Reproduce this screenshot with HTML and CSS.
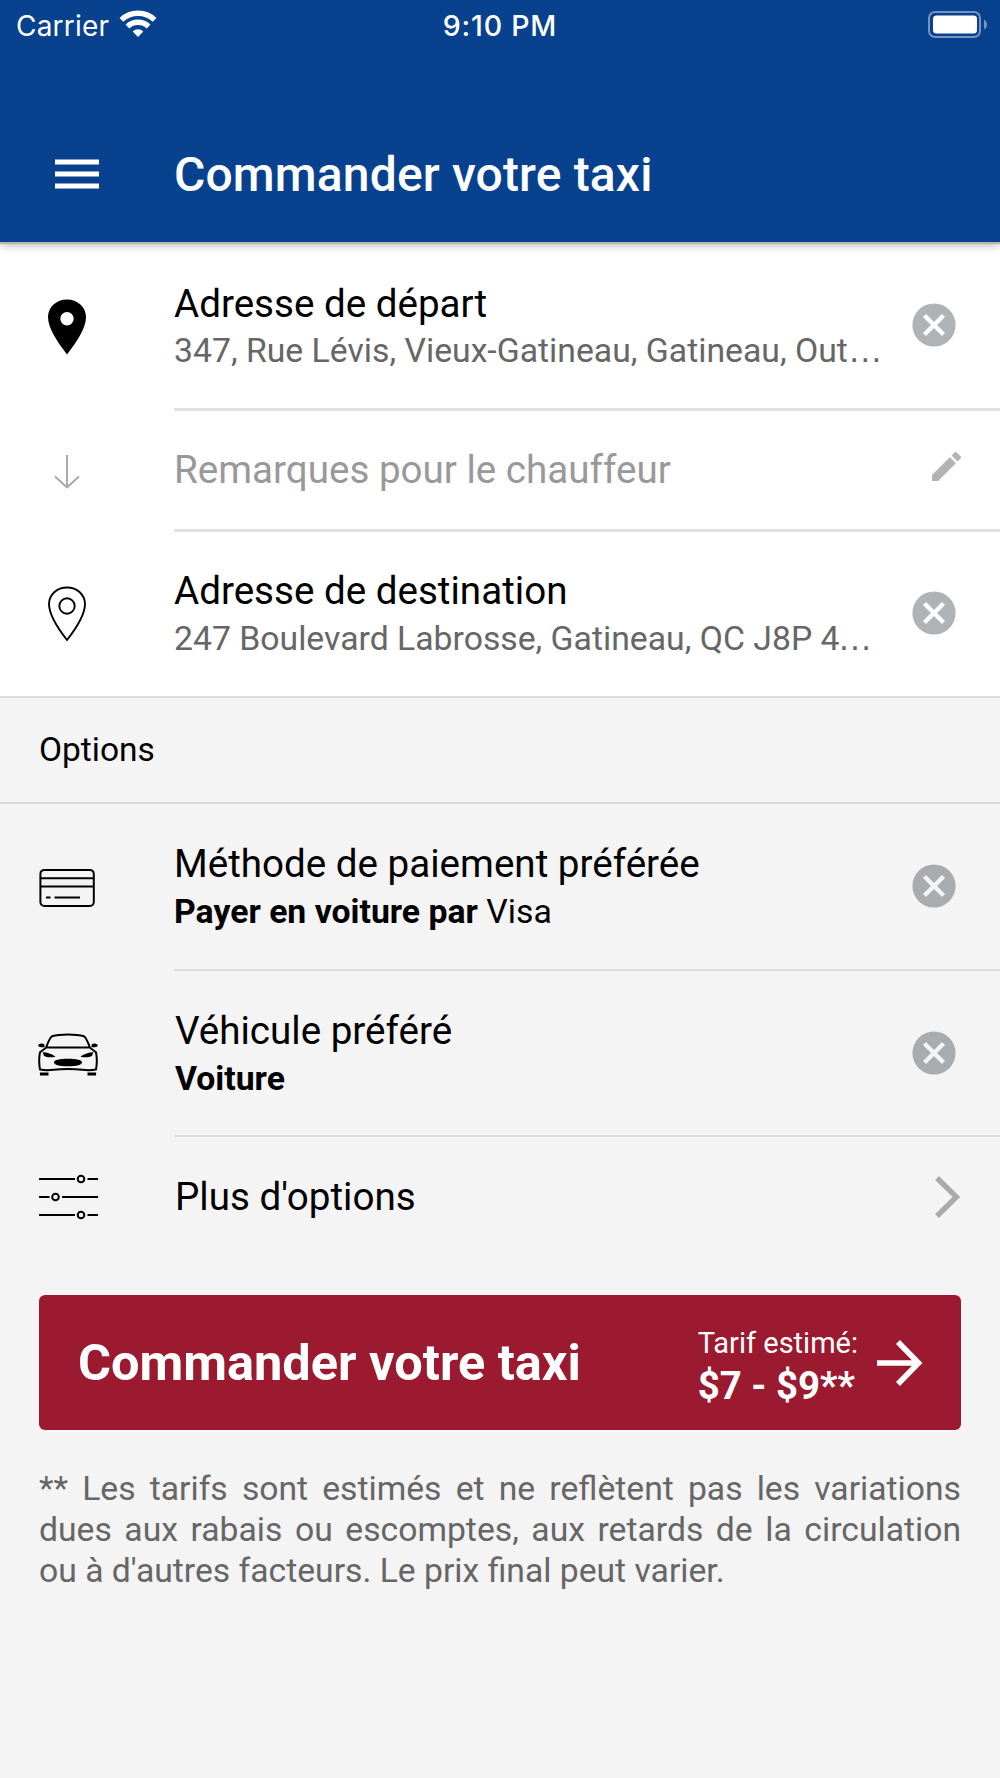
FILE: index.html
```html
<!DOCTYPE html>
<html lang="fr"><head><meta charset="utf-8"><title>Commander votre taxi</title><link rel="stylesheet" href="styles.css"></head>
<body>
<header class="header">
  <div class="status">
    <div class="carrier"><span class="carrier-name">Carrier</span>
      <svg class="wifi" width="38" height="28" viewBox="0 0 38 28"><g fill="none" stroke="#fff" stroke-width="5.4"><path d="M2.4 9.9a24.2 24.2 0 0 1 33.2 0"/><path d="M8.4 16.5a15.4 15.4 0 0 1 21.2 0"/></g><path d="M19 27l5.3-5.6a7.8 7.8 0 0 0-10.6 0z" fill="#fff"/></svg>
    </div>
    <span class="time">9:10 PM</span>
    <svg class="battery" width="60" height="28" viewBox="0 0 60 28"><rect x="1" y="1" width="51" height="25" rx="6" fill="none" stroke="#7793c0" stroke-width="2"/><rect x="5" y="4.500" width="44" height="18" rx="3.500" fill="#fff"/><path d="M56 8.500c4 2 4 8 0 10z" fill="#7793c0"/></svg>
  </div>
  <div class="toolbar">
    <svg class="menu" width="44" height="30" viewBox="0 0 44 30"><path d="M0 3h44M0 15h44M0 27h44" stroke="#fff" stroke-width="5.200"/></svg>
    <h1 class="title">Commander votre taxi</h1>
  </div>
</header>
<main>
  <section class="trip">
    <div class="row r-from">
      <div class="icon"><svg width="40" height="56" viewBox="0 0 40 56"><path fill-rule="evenodd" d="M20 .5C9.500 .5 1 8 1 18c0 11 9 24.500 19 37.500C30 42.500 39 29 39 18 39 8 30.500 .5 20 .5zm0 12.500a6.700 6.700 0 1 1 0 13.400 6.700 6.700 0 0 1 0-13.400z"/></svg></div>
      <div class="body"><div class="text"><div class="label">Adresse de départ</div><div class="sub">347, Rue Lévis, Vieux-Gatineau, Gatineau, Out<span class="dots">…</span></div></div>
      <svg class="clear" viewBox="0 0 44 44"><circle cx="22" cy="22" r="21.600" fill="#b0b3b6"/><path d="M12.500 12.500l19 19m0-19l-19 19" stroke="#fff" stroke-width="4.400"/></svg></div>
    </div>
    <div class="row r-note">
      <div class="icon"><svg width="28" height="36" viewBox="0 0 28 36"><path d="M14 1v32M2 22.500l12 10.800 12-10.800" fill="none" stroke="#aaa" stroke-width="2"/></svg></div>
      <div class="body"><div class="label placeholder">Remarques pour le chauffeur</div>
      <svg class="pencil" width="29" height="29" viewBox="3 3 18 18" fill="#b3b3b3"><path d="M3 17.250V21h3.750L17.810 9.940l-3.750-3.750L3 17.250zM20.710 7.040a1 1 0 0 0 0-1.410l-2.340-2.340a1 1 0 0 0-1.410 0l-1.830 1.830 3.750 3.750 1.830-1.830z"/></svg></div>
    </div>
    <div class="row r-to">
      <div class="icon"><svg width="40" height="56" viewBox="0 0 40 56" fill="none" stroke="#000" stroke-width="1.900"><path d="M20 1.500C10 1.500 2 8.500 2 18c0 11 9 24.500 18 36C29 42.500 38 29 38 18 38 8.500 30 1.500 20 1.500z"/><circle cx="20" cy="20" r="7.700"/></svg></div>
      <div class="body"><div class="text"><div class="label">Adresse de destination</div><div class="sub">247 Boulevard Labrosse, Gatineau, QC J8P 4<span class="dots tight">…</span></div></div>
      <svg class="clear" viewBox="0 0 44 44"><circle cx="22" cy="22" r="21.600" fill="#b0b3b6"/><path d="M12.500 12.500l19 19m0-19l-19 19" stroke="#fff" stroke-width="4.400"/></svg></div>
    </div>
  </section>
  <h2 class="section-title">Options</h2>
  <section>
    <div class="row r-pay">
      <div class="icon"><svg width="56" height="40" viewBox="0 0 56 40" fill="none" stroke="#000" stroke-width="2"><rect x="1.400" y="1.900" width="53.400" height="36" rx="4"/><path d="M1.400 10.200h53.400M1.400 18.600h53.400M7 29.400h4.500M15.500 29.400H41"/></svg></div>
      <div class="body"><div class="text"><div class="label">Méthode de paiement préférée</div><div class="sub strong"><b>Payer en voiture par</b> Visa</div></div>
      <svg class="clear" viewBox="0 0 44 44"><circle cx="22" cy="22" r="21.600" fill="#a9acaf"/><path d="M12.500 12.500l19 19m0-19l-19 19" stroke="#f4f4f4" stroke-width="4.400"/></svg></div>
    </div>
    <div class="row r-car">
      <div class="icon"><svg class="car" width="60" height="44" viewBox="0 0 60 44"><g fill="none" stroke="#000" stroke-width="2" stroke-linejoin="round"><path d="M8 14.800C10 10 11 5.500 14 3.200 22 1 38 1 46 3.200c3 2.300 4 6.800 6 11.600"/><path d="M8.500 14.400h43"/><path d="M8 14.800L2 19.300C.8 25 1 31 2 36.500c5 1 9 1 13.500.3 10-1.200 19-1.200 29 0 4.500.7 8.500.7 13.500-.3 1-5.500 1.200-11.500 0-17.200l-6-4.500"/></g><path d="M.5 11.500c2-1.500 4.500-1.300 5.700-.3l.5 3c-2.500.3-5 .2-6.200-.6zM59.500 11.500c-2-1.500-4.500-1.300-5.700-.3l-.5 3c2.500.3 5 .2 6.200-.6zM4.500 19.200c4.500 0 9.500 1.500 13 4.500-4 1-9 1-11.500-1zM55.500 19.200c-4.500 0-9.500 1.500-13 4.500 4 1 9 1 11.500-1zM16 29.200c0-2.200 6-3.400 14-3.400s14 1.200 14 3.400c0 2.600-5 4-14 4s-14-1.400-14-4zM1.800 39.600h8.700v3H2zM49.500 39.600h8.700l-.2 3h-8.500z"/></svg></div>
      <div class="body"><div class="text"><div class="label">Véhicule préféré</div><div class="sub strong"><b>Voiture</b></div></div>
      <svg class="clear" viewBox="0 0 44 44"><circle cx="22" cy="22" r="21.600" fill="#a9acaf"/><path d="M12.500 12.500l19 19m0-19l-19 19" stroke="#f4f4f4" stroke-width="4.400"/></svg></div>
    </div>
    <div class="row r-more">
      <div class="icon"><svg class="sliders" width="60" height="46" viewBox="0 0 60 46" fill="none" stroke="#000" stroke-width="2"><path d="M0 5h36M48.500 5H59M0 23h10.500M23 23h36M0 41h36M48.500 41H59"/><circle cx="42" cy="5" r="3.300"/><circle cx="16.500" cy="23" r="3.300"/><circle cx="42" cy="41" r="3.300"/></svg></div>
      <div class="body"><div class="label">Plus d'options</div>
      <svg class="chevron" width="25" height="42" viewBox="0 0 25 42"><path d="M2 2l19.500 19L2 40" fill="none" stroke="#aaa" stroke-width="5.400"/></svg></div>
    </div>
  </section>
  <button class="order"><span class="cta">Commander votre taxi</span><span class="fare"><span class="fare-label">Tarif estimé:</span><strong class="price">$7 - $9**</strong></span>
    <svg class="arrow" width="46" height="46" viewBox="0 0 46 46"><path d="M0 23h41M21 2l20.500 21L21 44" fill="none" stroke="#fff" stroke-width="5.600"/></svg>
  </button>
  <p class="footnote">** Les tarifs sont estimés et ne reflètent pas les variations dues aux rabais ou escomptes, aux retards de la circulation ou à d'autres facteurs. Le prix final peut varier.</p>
</main>
</body></html>
```
FILE: styles.css
```css
* { box-sizing: border-box; }
body { margin: 0; min-height: 1778px; background: #f4f4f4; color: #000; font-family: Roboto, "Noto Sans", sans-serif; }
svg { display: block; flex: none; }

.header { display: flex; flex-direction: column; position: relative; height: 242px; background: #08428f; color: #fff; box-shadow: 0 2px 0 #bdb1ac, 0 3px 9px rgba(0, 0, 0, .3); }
.status { height: 50px; display: grid; grid-template-columns: 1fr auto 1fr; font-family: Inter, sans-serif; }
.carrier { display: flex; padding: 10px 0 0 16px; gap: 9.500px; }
.carrier-name { font-size: 28px; line-height: 32px; letter-spacing: .2px; }
.time { font-size: 28.500px; line-height: 32px; font-weight: 550; letter-spacing: .8px; padding-top: 10px; }
.battery { justify-self: end; margin: 11px 12px 0 0; }
.toolbar { display: flex; align-items: center; height: 120px; margin-top: 65px; padding: 0 55px; }
.menu { margin: 0 75px 2px 0; }
.title { margin: 0; font-size: 48px; font-weight: 500; line-height: 56px; letter-spacing: .15px; }

.trip { background: #fff; }
.row { display: grid; grid-template-columns: 174px 1fr; }
.icon { padding-left: 39px; width: 95.500px; display: flex; align-items: center; justify-content: center; }
.car { margin: 1px 0 0 2px; }
.sliders { margin-left: 4px; }
.body { display: flex; align-items: center; justify-content: space-between; border-bottom: 2px solid #dcdcdc; padding-right: 39px; min-width: 0; }
.text { padding-top: 3px; }
.label { font-size: 38.600px; line-height: 48px; white-space: nowrap; }
.sub { font-size: 33.750px; line-height: 47px; white-space: nowrap; color: #666; }
.dots { font-family: "Liberation Sans", sans-serif; font-size: 35px; line-height: 1; }
.tight { margin-left: -2px; }
.strong { color: #000; }
.clear { width: 44px; height: 44px; margin-right: 5px; }
.chevron { margin-right: 1px; }
.placeholder { color: #999; }
.pencil { margin-bottom: 8px; }

.r-from { height: 169px; }
.r-from .label { padding-top: 1px; margin-bottom: -1px; }
.r-note { height: 121px; }
.r-from .body, .r-note .body { border-bottom: 3px solid #e2e2e2; }
.r-to { height: 164px; }
.r-to .body { border: 0; padding-bottom: 2px; }
.r-pay { height: 167px; }
.r-pay .body { padding-bottom: 2px; }
.r-car { height: 166px; }
.r-more { height: 120px; }
.r-more .body { border: 0; }
.r-car, .r-more { grid-template-columns: 175px 1fr; }

.section-title { margin: 0; height: 108px; padding-left: 39px; border: solid #dcdcdc; border-width: 2px 0; font-weight: 400; font-size: 33.500px; line-height: 104px; }

.order { font: inherit; color: #fff; background: #9b1a2f; border: 0; border-radius: 6px; margin: 38px 39px 0; width: 922px; height: 135px; padding: 0 38px 0 39px; display: flex; align-items: center; text-align: left; }
.cta { font-size: 50.500px; font-weight: 700; flex: 1; padding-bottom: 1px; }
.fare { display: flex; flex-direction: column; padding-top: 6px; }
.fare-label { font-size: 29px; line-height: 40px; }
.price { font-size: 38.400px; line-height: 46px; }
.arrow { margin-left: 19px; }

.footnote { margin: 38px 39px 0; font-size: 33.700px; line-height: 41.200px; color: #666; text-align: justify; }
```
